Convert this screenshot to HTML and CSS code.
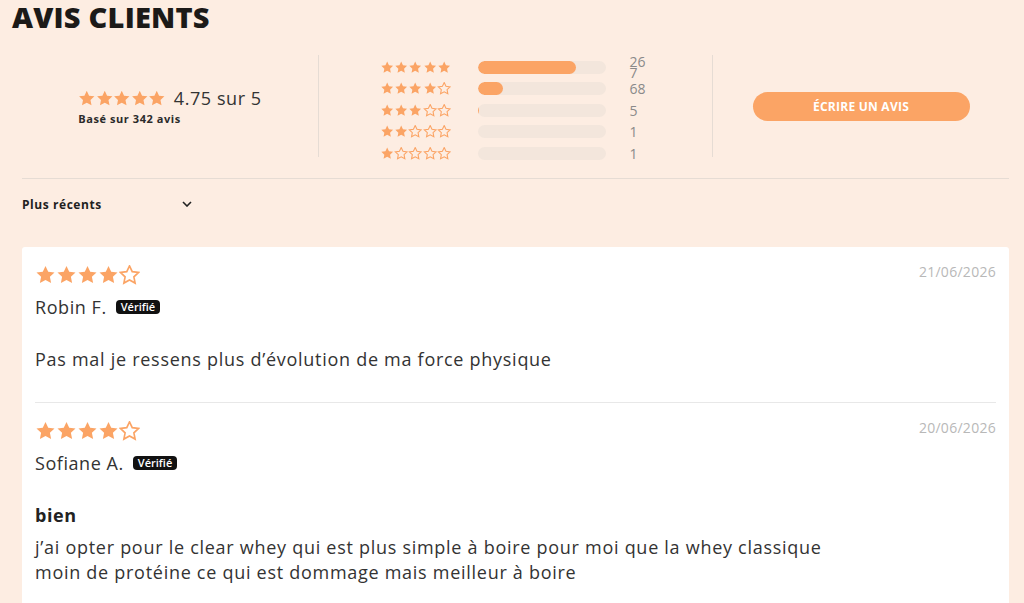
FILE: index.html
```html
<!DOCTYPE html>
<html lang="fr">
<head>
  <meta charset="UTF-8" />
  <title>Avis clients</title>
  <link rel="stylesheet" href="styles.css">
</head>
<body>

<svg class="defs" width="0" height="0" aria-hidden="true">
  <symbol id="star" viewBox="1.2 1.2 21.6 21.6">
    <path d="M12 2.2l2.95 6.2 6.8.85-5 4.7 1.3 6.75L12 17.4l-6.05 3.3 1.3-6.75-5-4.7 6.8-.85z" />
  </symbol>
</svg>

<h1 class="title">AVIS CLIENTS</h1>

<section class="summary">
  <div class="col col-score">
    <div class="score">
      <div class="score-line">
        <span class="stars stars-md" data-rating="5"></span>
        <span class="score-value">4.75 sur 5</span>
      </div>
      <div class="score-count">Basé sur 342 avis</div>
    </div>
  </div>

  <div class="col col-bars">
    <div class="bars">
      <div class="bar-row"><span class="stars stars-sm" data-rating="5"></span><div class="track"><div class="fill" style="width: 77%"></div></div><span class="count">267</span></div>
      <div class="bar-row"><span class="stars stars-sm" data-rating="4"></span><div class="track"><div class="fill" style="width: 20%"></div></div><span class="count">68</span></div>
      <div class="bar-row"><span class="stars stars-sm" data-rating="3"></span><div class="track"><div class="fill" style="width: 1.5%"></div></div><span class="count">5</span></div>
      <div class="bar-row"><span class="stars stars-sm" data-rating="2"></span><div class="track"><div class="fill" style="width: 0%"></div></div><span class="count">1</span></div>
      <div class="bar-row"><span class="stars stars-sm" data-rating="1"></span><div class="track"><div class="fill" style="width: 0%"></div></div><span class="count">1</span></div>
    </div>
  </div>

  <div class="col col-action">
    <button class="write-btn">ÉCRIRE UN AVIS</button>
  </div>
</section>

<div class="sort">
  <span>Plus récents</span>
  <svg class="chevron" viewBox="0 0 10 6" width="10" height="6"><path d="M1 1l4 4 4-4" /></svg>
</div>

<section class="reviews">
  <article class="review">
    <div class="review-head">
      <span class="stars stars-lg" data-rating="4"></span>
      <span class="date">21/06/2026</span>
    </div>
    <div class="author">Robin F. <span class="badge">Vérifié</span></div>
    <p class="review-text">Pas mal je ressens plus d’évolution de ma force physique</p>
  </article>

  <article class="review">
    <div class="review-head">
      <span class="stars stars-lg" data-rating="4"></span>
      <span class="date">20/06/2026</span>
    </div>
    <div class="author">Sofiane A. <span class="badge">Vérifié</span></div>
    <h4 class="review-title">bien</h4>
    <p class="review-text">j’ai opter pour le clear whey qui est plus simple à boire pour moi que la whey classique<br>moin de protéine ce qui est dommage mais meilleur à boire</p>
  </article>
</section>

<script>
// fill every .stars element with 5 icons, the first N solid
document.querySelectorAll(".stars").forEach(el => {
  const rating = parseInt(el.dataset.rating) || 0;
  let html = "";
  for (let i = 0; i < 5; i++) {
    html += `<svg class="${i < rating ? "on" : "off"}"><use href="#star"/></svg>`;
  }
  el.innerHTML = html;
});
</script>
</body>
</html>
```

FILE: styles.css
```css
body {
  margin: 0;
  font-family: "Open Sans", Arial, sans-serif;
  letter-spacing: 0.035em;
  background: #fdede2;
  color: #2e2e2e;
}
.defs {
  position: absolute;
}
.title {
  margin: 0;
  padding: 0 0 0 12px;
  font-size: 29px;
  line-height: 34px;
  font-weight: 800;
  color: #1c1a18;
  letter-spacing: 0.2px;
}

/* summary block */
.summary {
  display: flex;
  margin: 21px 15px 0 22px;
  padding-bottom: 21px;
  border-bottom: 1px solid #e6dcd4;
}
.col {
  display: flex;
  align-items: center;
  justify-content: center;
  height: 102px;
}
.col-score, .col-action {
  width: 296px;
}
.col-bars {
  flex: 1;
  border-left: 1px solid #e6dcd4;
  border-right: 1px solid #e6dcd4;
}
.score-line {
  display: flex;
  align-items: center;
  gap: 8px;
}
.score-value {
  font-size: 18px;
  color: #333;
}
.score-count {
  font-size: 11px;
  font-weight: 700;
  color: #2a2a2a;
  margin-top: 1px;
}

.stars {
  display: inline-flex;
}
.stars svg.on {
  fill: #fba465;
}
.stars svg.off {
  fill: none;
  stroke: #fba465;
  stroke-width: 1.8;
}
.stars-md svg {
  width: 17.5px;
  height: 17px;
}
.stars-sm svg {
  width: 14.4px;
  height: 13px;
}
.stars-lg svg {
  width: 21px;
  height: 20px;
}

.bars {
  display: flex;
  flex-direction: column;
  margin-top: 8px;
}
.bar-row {
  display: flex;
  align-items: center;
  min-height: 21.5px;
}
.bar-row .stars {
  width: 72px;
  margin-right: 26px;
}
.track {
  width: 128px;
  height: 13px;
  border-radius: 7px;
  background: #f3e6dc;
  overflow: hidden;
}
.fill {
  height: 100%;
  background: #fba465;
  border-radius: 7px;
}
.count {
  width: 22px;
  margin-left: 24px;
  font-size: 14px;
  line-height: 11px;
  letter-spacing: 0;
  color: #8a8a8a;
  word-break: break-all;
}
.bar-row:first-child .count {
  width: 18px;
  margin-right: 4px;
}

.write-btn {
  width: 217px;
  height: 29px;
  border: none;
  border-radius: 15px;
  background: #fba465;
  color: #fff;
  font-family: inherit;
  font-size: 12px;
  font-weight: 700;
  letter-spacing: 0.02em;
  cursor: pointer;
}

/* sort dropdown */
.sort {
  display: flex;
  align-items: center;
  width: 170px;
  justify-content: space-between;
  margin: 17px 0 0 22px;
  height: 16px;
  font-size: 12px;
  font-weight: 700;
  color: #1f1f1f;
}
.chevron path {
  fill: none;
  stroke: #222;
  stroke-width: 1.6;
}

/* review list */
.reviews {
  margin: 35px 15px 0 22px;
  padding: 0 13px;
  background: #fff;
  border-radius: 3px;
}
.review {
  padding: 18px 0 30px;
  border-bottom: 1px solid #e8e8e8;
}
.review-head {
  display: flex;
  justify-content: space-between;
  align-items: flex-start;
  height: 20px;
}
.date {
  font-size: 14px;
  line-height: 14px;
  letter-spacing: 0.02em;
  color: #b8b8b8;
}
.author {
  display: flex;
  align-items: center;
  gap: 9px;
  margin-top: 10px;
  font-size: 18px;
  line-height: 24px;
  color: #333;
}
.badge {
  background: #111;
  color: #fff;
  font-size: 11px;
  line-height: 14px;
  letter-spacing: 0;
  padding: 0 5px;
  border-radius: 4px;
  font-weight: 600;
}
.review-title {
  margin: 28px 0 8px;
  font-size: 18px;
  line-height: 24px;
  font-weight: 700;
  color: #222;
}
.review-text {
  margin: 28px 0 0;
  font-size: 18px;
  line-height: 25px;
  letter-spacing: 0.04em;
  color: #333;
}
.review-title + .review-text {
  margin-top: 0;
}
```
